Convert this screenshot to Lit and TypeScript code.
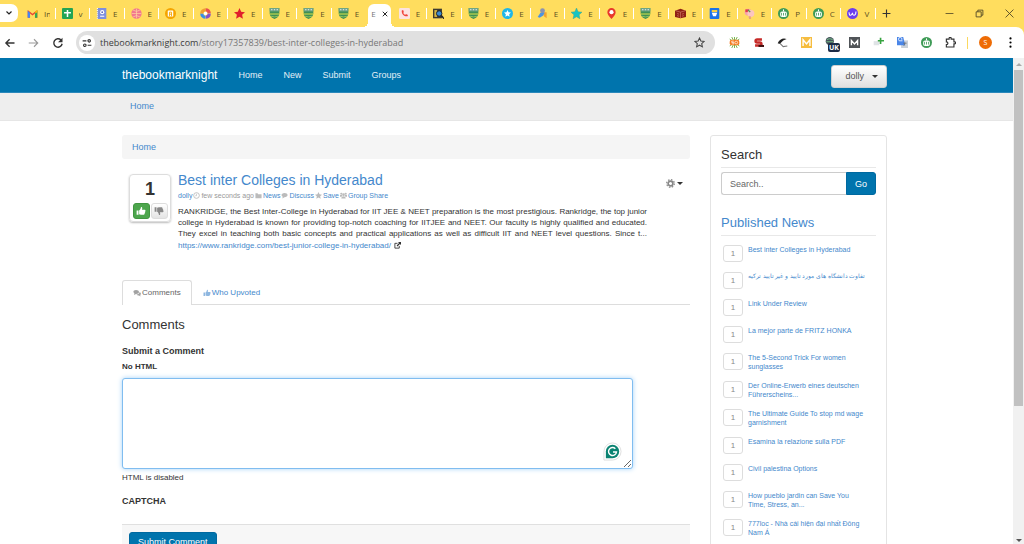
import { LitElement, html, css, svg } from "lit";
import { customElement, state } from "lit/decorators.js";
import { classMap } from "lit/directives/class-map.js";

const icon = (body: unknown, box = "0 0 16 16", cls = "") =>
  html`<svg class=${cls} viewBox=${box} aria-hidden="true">${body}</svg>`;

const shield = svg`<path d="M1 0h14v8c0 4-3 6.500-7 8C4 14.500 1 12 1 8z" fill="#3f8f55"/><path d="M1 0h14v5H1z" fill="#6fa585"/><path d="M3 2.500h2M7 2.500h2M11 2.500h2" stroke="#eef" stroke-width="1.400"/><path d="M1 8h14v1.500H1z" fill="#d8e04a"/><path d="M3 12q5 2 10 0" stroke="#a8d05a" fill="none" stroke-width="1.200"/>`;
const robot = svg`<circle cx="8" cy="8" r="8" fill="#3f9b57"/><path d="M8 2v3" stroke="#fff" stroke-width="1.600"/><rect x="3" y="5" width="10" height="8" rx="3" fill="#fff"/><path d="M5 7v4M8 7v4M11 7v4" stroke="#3f9b57" stroke-width="1.200"/>`;

const favicons: Record<string, unknown> = {
  gmail: svg`<path d="M1 14V3l7 5.500L15 3v11h-3.400V8L8 10.800 4.400 8v6z" fill="#ea4335"/><path d="M1 4v10h3.400V7z" fill="#4285f4"/><path d="M15 4v10h-3.400V7z" fill="#34a853"/><path d="M12 5l3-2v3l-3 2z" fill="#fbbc04"/>`,
  sheet: svg`<rect width="16" height="16" rx="1.500" fill="#23a455"/><path d="M8 3v10M3 7h10" stroke="#fff" stroke-width="2.200"/>`,
  doc: svg`<rect x="2" width="13" height="16" fill="#7d8fe0"/><path d="M2 0v16" stroke="#fff" stroke-width="1.500" stroke-dasharray="1.500 1.500"/><circle cx="9" cy="6" r="3" fill="#fff"/><circle cx="9" cy="6" r="1.300" fill="#5665c0"/><path d="M6 12h6" stroke="#fff" stroke-width="1.500"/>`,
  ball: svg`<circle cx="8" cy="8" r="7.500" fill="#f2788f"/><path d="M8 1v14M1 8h14M3 3q5 4 10 0M3 13q5-4 10 0" stroke="#ffd6a0" fill="none"/>`,
  book: svg`<circle cx="8" cy="8" r="8" fill="#f5a400"/><rect x="4" y="3.500" width="8" height="9" rx="1" fill="#fff"/><path d="M6.500 12V6h3v6M6.500 9h3" stroke="#f5a400" stroke-width="1.300" fill="none"/>`,
  swirl: svg`<g fill="none" stroke-width="4.500"><path d="M8 2.500a5.500 5.500 0 0 1 5.500 5" stroke="#e85050"/><path d="M13.500 8a5.500 5.500 0 0 1-5 5.500" stroke="#8a50c8"/><path d="M8 13.500A5.500 5.500 0 0 1 2.500 8" stroke="#3a8ee6"/><path d="M2.500 8A5.500 5.500 0 0 1 8 2.500" stroke="#f0a030"/></g><circle cx="8" cy="8" r="2.500" fill="#fff"/>`,
  redstar: svg`<path d="M8 0l2.400 5.400 5.600.6-4.200 3.900 1.200 5.800L8 12.800 3 15.700l1.200-5.800L0 6l5.600-.6z" fill="#e0202c"/>`,
  shield,
  phone: svg`<rect width="16" height="16" rx="2" fill="#fde3e0"/><path d="M4 3.500l2-.5 1.200 3-1.200 1c.7 1.500 1.600 2.400 3 3l1-1.200 3 1.200-.5 2C8 12.800 3.500 9 4 3.500z" fill="#f0453a"/>`,
  seek: svg`<rect x="0" y="1" width="13" height="14" fill="#3c3a32"/><path d="M2 3h4v10H2z" fill="#d6b640"/><circle cx="9" cy="8" r="4" fill="#3b8bd0" stroke="#222" stroke-width="1.400"/><path d="M12 11l4 4.500" stroke="#222" stroke-width="2.200"/>`,
  cyan: svg`<circle cx="8" cy="8" r="8" fill="#1fb6e8"/><path d="M8 3l1.500 3.300 3.500.4-2.600 2.400.7 3.600L8 11l-3.100 1.700.7-3.600L3 6.700l3.500-.4z" fill="#fff"/>`,
  person: svg`<path d="M9 6h5v9l-4-3z" fill="#f3a42e"/><circle cx="8" cy="4" r="3.500" fill="#8a93b0"/><path d="M1 13L5 7h6l-2 4-5 3z" fill="#4f93e0"/>`,
  teal: svg`<path d="M8 0l2.400 5.400 5.600.6-4.200 3.900 1.200 5.800L8 12.800 3 15.700l1.200-5.800L0 6l5.600-.6z" fill="#16c4c4" stroke="#3f9e80" stroke-width=".6"/>`,
  pin: svg`<path d="M8 16C4 11 2 9 2 6a6 6 0 0 1 12 0c0 3-2 5-6 10z" fill="#e8382c"/><circle cx="8" cy="6" r="3" fill="#fff"/>`,
  redbook: svg`<path d="M0 4l8-3 8 3v9l-8 2-8-2z" fill="#8f1f14"/><path d="M1 4l7 2 7-2M8 6v9M3 8l3 1M10 9l3-1M3 11l3 1M10 12l3-1" stroke="#d07868" fill="none"/>`,
  blue: svg`<rect x="1" width="14" height="16" rx="1.500" fill="#1a73e8"/><rect x="4" y="3" width="8" height="3" fill="#ffd23c"/><path d="M4 7h8l-2 5H6z" fill="#fff"/>`,
  flower: svg`<circle cx="6" cy="6" r="5" fill="#f5a3a8"/><path d="M2 2h5v4H2z" fill="#e23c4c"/><circle cx="10" cy="8" r="5" fill="#fbc5c0"/><path d="M6 3l3 3" stroke="#5a9a4c" stroke-width="2"/><path d="M8 12l1 4" stroke="#e8a080" stroke-width="3"/>`,
  robot,
  violet: svg`<circle cx="8" cy="8" r="8" fill="#6a3df0"/><path d="M3 6c0 7 4 5 5 1 0 5 5 5 5-2" stroke="#fff" stroke-width="1.500" fill="none"/>`,
};

const before: [string, string][] = [
  ["gmail", "In"], ["sheet", "v"], ["doc", "E"], ["ball", "E"], ["book", "E"],
  ["swirl", "E"], ["redstar", "E"], ["shield", "E"], ["shield", "E"], ["shield", "E"],
];
const after: [string, string][] = [
  ["phone", "E"], ["seek", "E"], ["shield", "E"], ["cyan", "E"], ["person", "E"],
  ["teal", "E"], ["pin", "E"], ["shield", "E"], ["redbook", "E"], ["blue", "E"],
  ["flower", "E"], ["robot", "P"], ["robot", "C"], ["violet", "V"],
];

const thumb = svg`<path d="M1 7h3v7H1zM5 7c2-1 2.500-3 3-5.500 2-.5 2.500 1.500 1.500 4.500h4.500c1.500 0 1.500 1.800.6 2.300.7.600.4 1.700-.4 2 .4.800 0 1.600-.7 1.900.2 1.200-.5 1.800-1.500 1.800H8c-1.300 0-2-.7-3-.9z" fill="currentColor"/>`;

@customElement("browser-frame")
class BrowserFrame extends LitElement {
  static styles = css`
    :host { display: block; font-family: "Open Sans", "Noto Sans", sans-serif; }
    button { border: 0; padding: 0; background: none; color: inherit; font: inherit; display: grid; place-items: center; }
    svg { display: block; }
    .strip { display: flex; height: 27px; background: #ffdd5e; }
    .search-tabs { flex: none; width: 18px; height: 18px; margin: 4px 3px 0 0; background: #fff; border-radius: 0 7px 7px 0; }
    .search-tabs svg { width: 8px; height: 8px; }
    .tabs { flex: 1; display: flex; min-width: 0; }
    .tab, .active { flex: 1 1 0; min-width: 0; box-sizing: border-box; display: flex; align-items: center; position: relative; }
    .tab { gap: 6px; padding: 0 6px 0 6px; }
    .tab svg { flex: none; width: 11px; height: 11px; }
    .tab span { flex: 1; overflow: hidden; font-size: 8px; line-height: 12px; white-space: nowrap; color: #5c4f22; }
    .bar::after { content: ""; position: absolute; right: 0; top: 8px; width: 1px; height: 11px; background: #fff; }
    .active { margin: 4px 2px 0; height: 23px; padding-bottom: 4px; justify-content: center; gap: 6px; background: #fff; border-radius: 6px 6px 0 0; font-size: 8px; color: #777; }
    .active::before, .active::after { content: ""; position: absolute; bottom: 0; width: 5px; height: 5px; }
    .active::before { right: 100%; background: radial-gradient(circle at 0 0, transparent 5px, #fff 5px); }
    .active::after { left: 100%; background: radial-gradient(circle at 100% 0, transparent 5px, #fff 5px); }
    .active svg { width: 6px; height: 6px; }
    .tools { flex: none; width: 148px; display: flex; align-items: center; box-sizing: border-box; padding: 0 10px 0 6px; }
    .tools svg { width: 9px; height: 9px; }
    .tools .gap { flex: 1; }
    .tools .win { margin-left: 21px; }
    .backing { background: #ffdd5e; }
    .toolbar { display: flex; align-items: center; height: 31px; box-sizing: border-box; padding: 0 8px 0 4px; background: #fff; border-radius: 0 8px 0 0; }
    .nav { flex: none; width: 24px; height: 24px; justify-content: start; }
    .nav svg { width: 12px; height: 12px; }
    .address { flex: 1; min-width: 0; display: flex; align-items: center; height: 23px; border-radius: 12px; background: #e0e0e0; padding: 0 10px 0 3px; box-sizing: border-box; }
    .info { flex: none; width: 16px; height: 16px; border-radius: 50%; background: #fff; margin-right: 5px; }
    .info svg { width: 10px; height: 10px; }
    .url { flex: 1; min-width: 0; position: relative; }
    .url input { display: block; width: 100%; height: 14px; box-sizing: border-box; border: 0; padding: 0; background: none; font: 9px "Open Sans", sans-serif; outline: none; }
    .shown { position: absolute; inset: 0; font-size: 9px; line-height: 14px; color: #777; pointer-events: none; white-space: nowrap; }
    .shown b { font-weight: 400; color: #3c3c3c; }
    .star svg { width: 11px; height: 11px; }
    .exts { flex: none; display: flex; align-items: center; padding-left: 7px; }
    .ext { width: 24px; height: 20px; position: relative; }
    .ext svg { width: 11px; height: 11px; }
    .badge { position: absolute; left: 10px; top: 10px; background: #1c2b46; color: #fff; font-size: 7px; font-weight: 700; line-height: 9px; width: 12px; border-radius: 2px; }
    .rule { width: 1px; height: 12px; background: #fbd960; margin: 0 11px 0 5px; }
    .avatar { width: 13px; height: 13px; border-radius: 50%; background: #ee6c05; color: #fff; font-size: 7px; margin-right: 13px; }
    .menu svg { width: 11px; height: 11px; }
  `;

  private tab([name, title]: [string, string], i: number, list: unknown[]) {
    const last = list === before && i === list.length - 1;
    return html`<div class=${classMap({ tab: true, bar: !last })}>${icon(favicons[name])}<span>${title}</span></div>`;
  }

  render() {
    return html`
      <div class="strip">
        <button class="search-tabs" aria-label="Search tabs">${icon(svg`<path d="M3 5l5 5 5-5" fill="none" stroke="#222" stroke-width="2.400"/>`)}</button>
        <div class="tabs">
          ${before.map((t, i) => this.tab(t, i, before))}
          <div class="active"><span>E</span>${icon(svg`<path d="M2 2l12 12M14 2L2 14" stroke="#222" stroke-width="2.600"/>`)}</div>
          ${after.map((t, i) => this.tab(t, i, after))}
        </div>
        <div class="tools">
          <button aria-label="New tab">${icon(svg`<path d="M8 1v14M1 8h14" stroke="#333" stroke-width="2"/>`)}</button>
          <span class="gap"></span>
          <button class="win" aria-label="Minimize">${icon(svg`<path d="M1 8h14" stroke="#4a4124" stroke-width="1.400"/>`)}</button>
          <button class="win" aria-label="Restore">${icon(svg`<path d="M2 5h9v9H2zM5 5V2h9v9h-3" fill="none" stroke="#4a4124" stroke-width="1.500"/>`)}</button>
          <button class="win" aria-label="Close">${icon(svg`<path d="M1 1l14 14M15 1L1 15" stroke="#4a4124" stroke-width="1.500"/>`)}</button>
        </div>
      </div>
      <div class="backing"><div class="toolbar">
        <button class="nav" aria-label="Back">${icon(svg`<path d="M14 8H3M7.500 3L2.500 8l5 5" fill="none" stroke="#333" stroke-width="1.800"/>`)}</button>
        <button class="nav" aria-label="Forward">${icon(svg`<path d="M1 8h12M8 3l5 5-5 5" fill="none" stroke="#999" stroke-width="1.500"/>`)}</button>
        <button class="nav" aria-label="Reload">${icon(svg`<path d="M13.500 9A5.600 5.600 0 1 1 12 4" fill="none" stroke="#333" stroke-width="1.900"/><path d="M14 1v6H8z" fill="#333"/>`)}</button>
        <div class="address">
          <button class="info" aria-label="Site information">${icon(svg`<path d="M1 4.500h6M9 11.500h6" stroke="#333" stroke-width="1.800"/><circle cx="11.500" cy="4.500" r="2" fill="none" stroke="#333" stroke-width="1.800"/><circle cx="4.500" cy="11.500" r="2" fill="none" stroke="#333" stroke-width="1.800"/>`)}</button>
          <div class="url">
            <input type="text" aria-label="Address" />
            <div class="shown"><b>thebookmarknight.com</b>/story17357839/best-inter-colleges-in-hyderabad</div>
          </div>
          <button class="star" aria-label="Bookmark">${icon(svg`<path d="M8 1.500l2 4.400 4.800.5-3.600 3.200 1 4.700L8 11.900l-4.200 2.400 1-4.700L1.200 6.400 6 5.900z" fill="none" stroke="#444" stroke-width="1.500"/>`)}</button>
        </div>
        <div class="exts">
          <button class="ext" aria-label="SEO">${icon(svg`<path d="M8 0v16M1 3l14 10M15 3L1 13M4 0l8 16M12 0L4 16" stroke="#6cae3e" stroke-width="1.300"/><rect x="1" y="4" width="14" height="8" rx="3" fill="#f47b20"/><path d="M7 6H4v2h3v2H4" stroke="#fff" fill="none"/><circle cx="10.500" cy="8" r="2" stroke="#fff" fill="none"/>`)}</button>
          <button class="ext" aria-label="Seoquake">${icon(svg`<path d="M13 3.500H6C3 3.500 3 8 6 8h4c3 0 3 4.500 0 4.500H3" fill="none" stroke="#c62a28" stroke-width="3.600"/><path d="M8 13h8" stroke="#401010" stroke-width="3"/>`)}</button>
          <button class="ext" aria-label="Capture">${icon(svg`<path d="M1 9C4 3 9 1 14 3L9 5 4 10z" fill="#222"/><path d="M4 9l5 5 6-1" stroke="#777" stroke-width="1.500" fill="none"/>`)}</button>
          <button class="ext" aria-label="Mail tracker">${icon(svg`<rect width="16" height="16" fill="#f6bd3f"/><path d="M3 13V4l5 6 5-6v9" stroke="#fff" stroke-width="2" fill="none"/>`)}</button>
          <button class="ext" aria-label="VPN">${icon(svg`<circle cx="7" cy="6" r="6" fill="#47515c"/><path d="M3 4q4-3 8 0M2 7h10" stroke="#70b884" fill="none" stroke-width="1.500"/>`)}<span class="badge">UK</span></button>
          <button class="ext" aria-label="Moz">${icon(svg`<rect width="16" height="16" fill="#505458"/><path d="M3.500 12V5L8 10l4.500-5v7" stroke="#fff" stroke-width="2" fill="none"/>`)}</button>
          <button class="ext" aria-label="Add">${icon(svg`<path d="M1 6h8v6H1z" fill="#dfe3e6"/><path d="M11 1v9M7 5.500h9" stroke="#37a340" stroke-width="2.400"/>`)}</button>
          <button class="ext" aria-label="Translate">${icon(svg`<rect x="6" y="5" width="10" height="11" fill="#c9d0d8"/><path d="M0 0h9l3 12H0z" fill="#4a86e8"/><path d="M8 5.500H5.500A2.500 2.500 0 1 1 7 4" stroke="#fff" fill="none" stroke-width="1.200"/><path d="M9 9h5M11.500 8c0 3-1 4-2 5" stroke="#666" fill="none"/>`)}</button>
          <button class="ext" aria-label="Assistant">${icon(robot)}</button>
          <button class="ext" aria-label="Extensions">${icon(svg`<path d="M2 3h4V2a1.500 1.500 0 0 1 3 0v1h4v4h1a1.500 1.500 0 0 1 0 3h-1v4.500H2V11c3 0 3-4 0-4z" fill="none" stroke="#333" stroke-width="1.700"/>`)}</button>
          <span class="rule"></span>
          <button class="avatar" aria-label="Profile">S</button>
          <button class="menu" aria-label="Menu">${icon(svg`<circle cx="8" cy="2" r="1.600"/><circle cx="8" cy="8" r="1.600"/><circle cx="8" cy="14" r="1.600"/>`)}</button>
        </div>
      </div></div>`;
  }
}

@customElement("news-panel")
class NewsPanel extends LitElement {
  static styles = css`
    :host { display: block; box-sizing: border-box; border: 1px solid #e4e4e4; border-radius: 3px; padding: 10px; }
    h2 { margin: 0; font-size: 13px; line-height: 18px; font-weight: 400; color: #333; border-bottom: 1px solid #e8e8e8; padding-bottom: 3px; }
    a { color: #4488cc; text-decoration: none; }
    form { display: flex; margin: 4px 0 19px; }
    input { flex: 1; min-width: 0; height: 23px; box-sizing: border-box; border: 1px solid #ccc; border-right: 0; border-radius: 3px 0 0 3px; padding: 0 8px; font: 9px "Liberation Sans", Arial, sans-serif; }
    input::placeholder { color: #666; }
    button { width: 30px; border: 1px solid #0069a0; background: #0074ad; color: #fff; font: 9px "Liberation Sans", Arial, sans-serif; border-radius: 0 3px 3px 0; padding: 0; }
    ul { list-style: none; margin: 9px 0 0; padding: 0 0 0 2px; }
    li { display: flex; gap: 5px; margin-bottom: 10px; }
    .count { flex: none; width: 20px; height: 17px; box-sizing: border-box; border: 1px solid #ddd; border-radius: 3px; font-size: 8px; line-height: 15px; text-align: center; color: #888; }
    li a { font-size: 7px; line-height: 9px; white-space: nowrap; }
    li a:lang(fa) { font-size: 6px; }
  `;

  private items = [
    "Best inter Colleges in Hyderabad",
    "تفاوت دانشگاه های مورد تایید و غیر تایید ترکیه",
    "Link Under Review",
    "La mejor parte de FRITZ HONKA",
    "The 5-Second Trick For women\nsunglasses",
    "Der Online-Erwerb eines deutschen\nFührerscheins...",
    "The Ultimate Guide To stop md wage\ngarnishment",
    "Esamina la relazione sulla PDF",
    "Civil palestina Options",
    "How pueblo jardin can Save You\nTime, Stress, an...",
    "777loc - Nhà cái hiện đại nhất Đông\nNam Á",
  ];

  render() {
    return html`
      <h2>Search</h2>
      <form @submit=${(e: Event) => e.preventDefault()}>
        <input type="text" placeholder="Search.." aria-label="Search" /><button>Go</button>
      </form>
      <h2><a href="#">Published News</a></h2>
      <ul>
        ${this.items.map((t) => html`<li><span class="count">1</span><a href="#" lang=${/[\u0600-\u06ff]/.test(t) ? "fa" : "en"}>${t.split("\n").map((l, i) => (i ? html`<br />${l}` : l))}</a></li>`)}
      </ul>`;
  }
}

@customElement("app-root")
class AppRoot extends LitElement {
  static styles = css`
    :host { display: flex; flex-direction: column; height: 100vh; overflow: hidden; background: #fff; font-family: "Liberation Sans", Arial, sans-serif; color: #333; }
    a { color: #4488cc; text-decoration: none; }
    h1, h2, h3, p { margin: 0; }
    button { font: inherit; }
    svg { display: block; flex: none; }
    browser-frame { flex: none; }
    .view { flex: 1; min-height: 0; display: flex; }
    .page { flex: 1; min-width: 0; overflow: hidden; }
    .container { max-width: 765px; margin: 0 auto; padding-right: 4px; }
    .navbar { background: #0074ad; border-bottom: 1px solid #2a88bb; }
    .navbar .container { display: flex; align-items: center; height: 34px; }
    .brand { font-size: 12px; color: #fff; margin-right: 21px; }
    .links { display: flex; flex: 1; gap: 21px; font-size: 9px; }
    .links a { color: #e3eff6; }
    .user { display: flex; align-items: center; gap: 8px; height: 23px; box-sizing: border-box; padding: 0 8px 0 13px; margin-top: 2px; border: 1px solid #d0d0d0; border-radius: 3px; background: linear-gradient(#fff, #e0e0e0); font-size: 9px; color: #555; }
    .caret { border: 3px solid transparent; border-top-color: #333; border-bottom: 0; }
    .sub { background: #eee; height: 28px; font-size: 9px; line-height: 26px; border-bottom: 1px solid #e6e6e6; box-sizing: border-box; }
    .sub a { padding-left: 8px; }
    .columns { display: grid; grid-template-columns: minmax(0, 568px) minmax(0, 177px); justify-content: space-between; padding-top: 14px; }
    .crumb { background: #f5f5f5; border-radius: 3px; font-size: 9px; line-height: 24px; padding: 0 10px; }
    .story { display: flex; gap: 7px; padding: 12px 7px 0; }
    .vote { flex: none; width: 42px; height: 48px; margin-top: 3px; box-sizing: border-box; border: 1px solid #ddd; border-radius: 4px; box-shadow: 0 1px 2px #bbb; text-align: center; }
    .vote strong { display: block; font-size: 18px; line-height: 28px; }
    .hands { display: flex; justify-content: center; gap: 1px; }
    .hands button { width: 17px; height: 16px; display: grid; place-items: center; border: 1px solid #ddd; border-radius: 3px; background: linear-gradient(#fff, #e4e4e4); color: #888; padding: 0; }
    .hands .up { background: #4da64d; border-color: #419641; color: #fff; }
    .hands svg { width: 10px; height: 10px; }
    .down svg { transform: rotate(180deg) scaleX(-1); }
    .body { flex: 1; min-width: 0; }
    .body h1 { font-size: 14px; font-weight: 400; line-height: 18px; }
    .meta { display: flex; align-items: center; gap: 1px; font-size: 7px; line-height: 9px; margin: 2px 0 6px; color: #999; }
    .meta svg { width: 7px; height: 7px; color: #bbb; }
    .meta .group { fill: #bbb; }
    .text { font-size: 8px; line-height: 11px; text-align: justify; text-align-last: justify; margin-bottom: 1px; }
    .source { display: flex; gap: 3px; align-items: center; font-size: 8px; line-height: 11px; }
    .source svg { width: 7px; height: 7px; }
    .gear { flex: none; display: flex; align-items: center; justify-content: end; gap: 2px; width: 29px; height: 11px; padding: 0; margin-top: 7px; border: 0; background: none; }
    .gear svg { width: 9px; height: 9px; color: #888; }
    .tabs { display: flex; margin-top: 29px; border-bottom: 1px solid #ddd; font-size: 8px; }
    .tabs a { display: flex; align-items: center; gap: 1px; height: 25px; box-sizing: border-box; padding: 0 10px 1px; border: 1px solid transparent; border-bottom: 0; margin-bottom: -1px; }
    .tabs .on { background: #fff; border-color: #ddd; border-radius: 3px 3px 0 0; color: #666; }
    .tabs svg { width: 8px; height: 8px; opacity: 0.6; }
    .heading { font-size: 13px; font-weight: 400; line-height: 18px; margin-top: 11px; }
    .title { display: block; font-size: 9px; font-weight: 700; line-height: 12px; margin-top: 11px; }
    .hint { display: block; font-size: 8px; line-height: 10px; }
    .strong { font-weight: 700; margin: 5px 0 6px; }
    .editor { position: relative; width: 90%; margin-bottom: 4px; }
    textarea { display: block; width: 100%; height: 91px; box-sizing: border-box; border: 1px solid #80bdf0; border-radius: 3px; box-shadow: 0 0 5px #a5d2f7; outline: none; resize: vertical; padding: 6px; font: inherit; font-size: 9px; }
    .grammar { position: absolute; right: 11px; bottom: 8px; width: 19px; height: 19px; }
    .captcha { margin-top: 12px; }
    .actions { margin-top: 17px; border-top: 1px solid #e0e0e0; background: #f7f7f7; padding: 6px 7px; }
    .submit { background: #0074ad; border: 1px solid #0069a0; border-radius: 3px; color: #fff; font-size: 9px; line-height: 18px; padding: 0 8px; white-space: nowrap; }
    .scroll { flex: none; width: 11px; background: #f1f1f1; display: flex; flex-direction: column; align-items: center; }
    .arrow { height: 12px; display: grid; place-items: center; }
    .arrow::before { content: ""; border: 3px solid transparent; border-bottom-color: #aaa; border-top: 0; }
    .arrow.dn { height: 8px; }
    .arrow.dn::before { border: 3px solid transparent; border-top-color: #555; border-bottom: 0; }
    .track { flex: 1; width: 9px; }
    .thumb { height: 72%; background: #c1c1c1; }
  `;

  @state() private comment = "";

  render() {
    return html`
      <browser-frame></browser-frame>
      <div class="view">
        <div class="page">
          <nav class="navbar"><div class="container">
            <a class="brand" href="#">thebookmarknight</a>
            <div class="links"><a href="#">Home</a><a href="#">New</a><a href="#">Submit</a><a href="#">Groups</a></div>
            <button class="user">dolly<span class="caret"></span></button>
          </div></nav>
          <div class="sub"><div class="container"><a href="#">Home</a></div></div>
          <div class="container columns">
            <main>
              <div class="crumb"><a href="#">Home</a></div>
              <article class="story">
                <div class="vote">
                  <strong>1</strong>
                  <div class="hands">
                    <button class="up" aria-label="Upvote">${icon(thumb)}</button>
                    <button class="down" aria-label="Downvote">${icon(thumb)}</button>
                  </div>
                </div>
                <div class="body">
                  <h1><a href="#">Best inter Colleges in Hyderabad</a></h1>
                  <div class="meta">
                    <a href="#">dolly</a>
                    ${icon(svg`<circle cx="8" cy="8" r="6.500" fill="none" stroke="currentColor" stroke-width="2"/><path d="M8 4v4.500H5" fill="none" stroke="currentColor" stroke-width="1.500"/>`)}few seconds ago
                    ${icon(svg`<path d="M1 3h5l1 2h8v9H1z" fill="currentColor"/>`)}<a href="#">News</a>
                    ${icon(svg`<path d="M8 2c4 0 7 2 7 5s-3 5-7 5l-5 3 1-4C-1 8 1 2 8 2z" fill="currentColor"/>`)}<a href="#">Discuss</a>
                    ${icon(svg`<path d="M8 0l2.400 5.400 5.600.6-4.200 3.900 1.200 5.800L8 12.800 3 15.700l1.200-5.800L0 6l5.600-.6z" fill="currentColor"/>`)}<a href="#">Save</a>
                    ${icon(svg`<circle cx="3" cy="4" r="2.500"/><circle cx="13" cy="4" r="2.500"/><circle cx="8" cy="6" r="3"/><path d="M0 11V7h5l-1 4zM16 11V7h-5l1 4zM3 15c0-7 10-7 10 0z"/>`, "0 0 16 16", "group")}<a href="#">Group Share</a>
                  </div>
                  <p class="text">RANKRIDGE, the Best Inter-College in Hyderabad for IIT JEE &amp; NEET preparation is the most prestigious. Rankridge, the top junior college in Hyderabad is known for providing top-notch coaching for IITJEE and NEET. Our faculty is highly qualified and educated. They excel in teaching both basic concepts and practical applications as well as difficult IIT and NEET level questions. Since t...</p>
                  <div class="source"><a href="#">https://www.rankridge.com/best-junior-college-in-hyderabad/</a>${icon(svg`<path d="M8 3H2v11h10V9" fill="none" stroke="#333" stroke-width="2"/><path d="M9 0h7v7l-2.500-2.500L8 10 6 8l5.500-5.500z" fill="#333"/>`)}</div>
                </div>
                <button class="gear" aria-label="Story options">${icon(svg`<circle cx="8" cy="8" r="4.200" fill="none" stroke="currentColor" stroke-width="3"/><circle cx="8" cy="8" r="6.800" fill="none" stroke="currentColor" stroke-width="2.200" stroke-dasharray="2.700 2.640"/>`)}<span class="caret"></span></button>
              </article>
              <div class="tabs">
                <a class="on" href="#">${icon(svg`<path d="M6 2c3.500 0 6 1.700 6 4s-2.500 4-6 4l-4 2 .8-3C-1 6 1 2 6 2z" fill="currentColor"/><path d="M13 6c4 2 3 5 1.500 6l.5 3-3-2c-2 0-4-.5-5-2 4 0 6-2 6-5z" fill="currentColor"/>`)}Comments</a>
                <a href="#">${icon(thumb)}Who Upvoted</a>
              </div>
              <h2 class="heading">Comments</h2>
              <h3 class="title">Submit a Comment</h3>
              <label class="hint strong" for="comment">No HTML</label>
              <div class="editor">
                <textarea id="comment" .value=${this.comment} @input=${(e: Event) => (this.comment = (e.target as HTMLTextAreaElement).value)}></textarea>
                ${icon(svg`<path d="M1 19V10a9 9 0 1 1 9 9z" fill="#fff" stroke="#ddd"/><path d="M3 17v-7a7 7 0 1 1 7 7z" fill="#0b8372"/><path d="M13 7a4.200 4.200 0 1 0 1.200 3.500H10.500" fill="none" stroke="#fff" stroke-width="1.500"/>`, "0 0 20 20", "grammar")}
              </div>
              <span class="hint">HTML is disabled</span>
              <h3 class="title captcha">CAPTCHA</h3>
              <div class="actions"><button class="submit">Submit Comment</button></div>
            </main>
            <news-panel></news-panel>
          </div>
        </div>
        <div class="scroll"><div class="arrow"></div><div class="track"><div class="thumb"></div></div><div class="arrow dn"></div></div>
      </div>`;
  }
}
